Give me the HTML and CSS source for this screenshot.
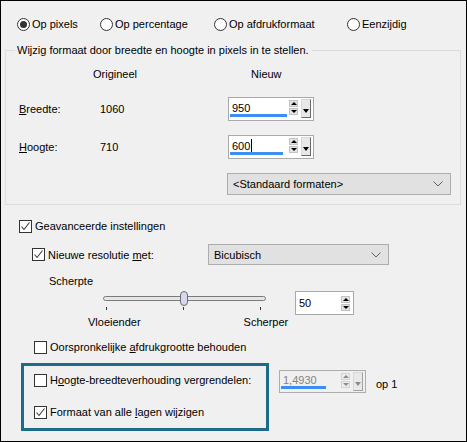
FILE: index.html
```html
<!DOCTYPE html>
<html lang="nl">
<head>
  <link rel="stylesheet" href="styles.css">
</head>
<body>
  <div class="dialog">
    <div class="modes">
      <label class="radio"><span class="circle on"></span>Op pixels</label>
      <label class="radio"><span class="circle"></span>Op percentage</label>
      <label class="radio"><span class="circle"></span>Op afdrukformaat</label>
      <label class="radio"><span class="circle"></span>Eenzijdig</label>
    </div>

    <fieldset class="group">
      <legend>Wijzig formaat door breedte en hoogte in pixels in te stellen.</legend>
      <div class="dim-head">
        <span class="col-orig">Origineel</span>
        <span class="col-new">Nieuw</span>
      </div>
      <div class="dim-row">
        <span class="dim-label"><u>B</u>reedte:</span>
        <span class="dim-value">1060</span>
        <div class="spin">
          <span class="spin-text">950</span>
          <span class="spin-btns"><i class="arr up"></i><i class="arr down"></i></span>
          <span class="spin-drop"><i class="arr down"></i></span>
          <span class="spin-bar" style="width:57px"></span>
        </div>
      </div>
      <div class="dim-row second">
        <span class="dim-label"><u>H</u>oogte:</span>
        <span class="dim-value">710</span>
        <div class="spin">
          <span class="spin-text">600<span class="caret"></span></span>
          <span class="spin-btns"><i class="arr up"></i><i class="arr down"></i></span>
          <span class="spin-drop"><i class="arr down"></i></span>
          <span class="spin-bar" style="width:53px"></span>
        </div>
      </div>
      <div class="select preset">
        <span>&lt;Standaard formaten&gt;</span>
        <svg width="10" height="6" viewBox="0 0 10 6"><polyline points="0.5,0.5 5,5 9.5,0.5" fill="none" stroke="#606060"/></svg>
      </div>
    </fieldset>

    <label class="check row-adv"><span class="box"><svg width="11" height="11" viewBox="0 0 11 11"><polyline points="1.5,5.5 4,8.5 9.5,1.5" fill="none" stroke="#3a3a3a" stroke-width="1.1"/></svg></span><span>Geavanceerde instellingen</span></label>

    <div class="row-res">
      <label class="check"><span class="box"><svg width="11" height="11" viewBox="0 0 11 11"><polyline points="1.5,5.5 4,8.5 9.5,1.5" fill="none" stroke="#3a3a3a" stroke-width="1.1"/></svg></span><span>Nieuwe resolutie <u>m</u>et:</span></label>
      <div class="select method">
        <span>Bicubisch</span>
        <svg width="10" height="6" viewBox="0 0 10 6"><polyline points="0.5,0.5 5,5 9.5,0.5" fill="none" stroke="#606060"/></svg>
      </div>
    </div>

    <div class="sharp-title">Scherpte</div>
    <div class="sharp-row">
      <div class="slider">
        <span class="track"></span>
        <span class="thumb"></span>
        <span class="tick t1"></span>
        <span class="tick t2"></span>
        <span class="tick t3"></span>
      </div>
      <div class="spin small">
        <span class="spin-text">50</span>
        <span class="spin-btns"><i class="arr up"></i><i class="arr down"></i></span>
      </div>
    </div>
    <div class="sharp-labels">
      <span class="lbl-soft">Vloeiender</span>
      <span class="lbl-hard">Scherper</span>
    </div>

    <label class="check row-keep"><span class="box"></span><span>Oorspronkelijke <u>a</u>fdrukgrootte behouden</span></label>

    <div class="lock-row">
      <div class="marked">
        <label class="check"><span class="box"></span><span>H<u>o</u>ogte-breedteverhouding vergrendelen:</span></label>
        <label class="check layers"><span class="box"><svg width="11" height="11" viewBox="0 0 11 11"><polyline points="1.5,5.5 4,8.5 9.5,1.5" fill="none" stroke="#3a3a3a" stroke-width="1.1"/></svg></span><span>Formaat van alle <u>l</u>agen wijzigen</span></label>
      </div>
      <div class="spin disabled">
        <span class="spin-text">1,4930</span>
        <span class="spin-btns"><i class="arr up"></i><i class="arr down"></i></span>
        <span class="spin-drop"><i class="arr down"></i></span>
        <span class="spin-bar" style="width:45px"></span>
      </div>
      <span class="ratio">op 1</span>
    </div>
  </div>
</body>
</html>
```

FILE: styles.css
```css
* {
  box-sizing: border-box;
}

body {
  margin: 0;
  font-family: "Liberation Sans", Arial, sans-serif;
  font-size: 11px;
  color: #000;
}

.dialog {
  width: 467px;
  height: 442px;
  border: 1px solid #000;
  background: #f0f0f0;
  padding-top: 16px;
  line-height: 14px;
}

/* radio row */
.modes {
  display: grid;
  grid-template-columns: 83px 114px 133px auto;
  padding-left: 16px;
  height: 14px;
}

.radio {
  display: flex;
  align-items: center;
  gap: 2px;
  white-space: nowrap;
}

.circle {
  width: 13px;
  height: 13px;
  border: 1px solid #333;
  border-radius: 50%;
  background: #fff;
  display: flex;
  align-items: center;
  justify-content: center;
}

.circle.on::after {
  content: "";
  width: 7px;
  height: 7px;
  border-radius: 50%;
  background: #333;
}

/* group box */
.group {
  margin: 12px 5px 0 4px;
  padding: 0 0 9px 13px;
  border: 1px solid #dcdcdc;
  min-width: 0;
}

.group legend {
  margin-left: -4px;
  padding: 0 3px 0 2px;
  line-height: 14px;
  white-space: nowrap;
}

.dim-head {
  display: flex;
  margin-top: 10px;
  height: 14px;
  padding-left: 74px;
}

.col-orig {
  width: 158px;
}

.dim-row {
  display: flex;
  align-items: center;
  height: 24px;
  margin-top: 16px;
}

.dim-row.second {
  margin-top: 14px;
}

.dim-label {
  width: 81px;
}

.dim-value {
  width: 128px;
}

/* spin box */
.spin {
  position: relative;
  display: flex;
  align-items: center;
  width: 86px;
  height: 24px;
  border: 1px solid #a9a9a9;
  background: #fff;
  padding: 0 2px 0 3px;
}

.spin-text {
  flex: 1;
  padding-bottom: 3px;
}

.caret {
  display: inline-block;
  width: 1px;
  height: 14px;
  margin-left: 1px;
  background: #000;
  vertical-align: -3px;
}

.spin-btns {
  display: flex;
  flex-direction: column;
  gap: 1px;
  margin-top: -3px;
}

.spin-btns .arr {
  width: 9px;
  height: 7px;
  background: #e3e3e3;
  border: 1px solid #c4c4c4;
}

.spin-drop {
  width: 10px;
  height: 19px;
  margin-left: 3px;
  margin-top: -1px;
  background: #e8e8e8;
  border-right: 1px solid #6a6a6a;
  border-bottom: 1px solid #6a6a6a;
  border-top: 1px solid #d8d8d8;
  border-left: 1px solid #d8d8d8;
  display: flex;
  justify-content: center;
  padding-top: 5px;
}

.arr {
  display: flex;
  justify-content: center;
  align-items: center;
}

.arr::after {
  content: "";
  border-left: 3px solid transparent;
  border-right: 3px solid transparent;
}

.arr.up::after {
  border-bottom: 3px solid #000;
}

.arr.down::after {
  border-top: 3px solid #000;
}

.spin-drop .arr::after {
  border-top-width: 4px;
}

.spin-bar {
  position: absolute;
  left: 1px;
  bottom: 3px;
  height: 3px;
  background: #3c8ff0;
}

/* select */
.select {
  display: flex;
  align-items: center;
  justify-content: space-between;
  height: 22px;
  border: 1px solid #adadad;
  background: #e1e1e1;
  padding: 0 7px 0 5px;
}

.select.preset {
  width: 224px;
  margin: 14px 0 0 208px;
}

/* checkboxes */
.check {
  display: flex;
  align-items: center;
  gap: 3px;
  height: 14px;
  white-space: nowrap;
}

.box {
  width: 13px;
  height: 13px;
  border: 1px solid #333;
  background: #fff;
  display: flex;
  align-items: center;
  justify-content: center;
}

.row-adv {
  margin: 14px 0 0 18px;
}

.row-res {
  display: flex;
  align-items: center;
  height: 21px;
  margin: 11px 0 0 31px;
}

.row-res .check {
  width: 176px;
}

.select.method {
  width: 181px;
  height: 21px;
}

.sharp-title {
  margin: 9px 0 0 48px;
}

.sharp-row {
  display: flex;
  margin: 3px 0 0 99px;
  height: 24px;
}

.slider {
  position: relative;
  width: 170px;
  height: 24px;
}

.track {
  position: absolute;
  left: 3px;
  top: 5px;
  width: 163px;
  height: 5px;
  border: 1px solid #7a7a7a;
  border-radius: 3px;
  background: #e6e6e6;
}

.thumb {
  position: absolute;
  left: 80px;
  top: 0;
  width: 8px;
  height: 15px;
  border: 1px solid #6d6d6d;
  border-radius: 4px;
  background: #d6d6ec;
}

.tick {
  position: absolute;
  top: 16px;
  width: 1px;
  height: 3px;
  background: #333;
}

.t1 { left: 6px; }
.t2 { left: 83px; }
.t3 { left: 160px; }

.spin.small {
  width: 59px;
  margin-left: 25px;
}

.spin.small .spin-text {
  padding-bottom: 0;
}

.spin.small .spin-btns {
  margin-top: 0;
  margin-right: 1px;
}

.sharp-labels {
  display: flex;
  height: 14px;
  padding-left: 87px;
}

.lbl-hard {
  margin-left: 103px;
}

.row-keep {
  margin: 11px 0 0 33px;
}

/* highlighted block */
.lock-row {
  display: flex;
  align-items: flex-start;
  margin: 9px 0 0 20px;
}

.marked {
  width: 248px;
  border: 3px solid #1c6b89;
  padding: 7px 0 9px 10px;
}

.marked .layers {
  margin-top: 18px;
}

.spin.disabled {
  width: 87px;
  height: 23px;
  margin: 7px 0 0 10px;
  background: #f0f0f0;
  border-color: #adadad;
  color: #838383;
}

.spin.disabled .arr.up::after {
  border-bottom-color: #8a8a8a;
}

.spin.disabled .arr.down::after {
  border-top-color: #8a8a8a;
}

.spin.disabled .spin-btns .arr {
  background: #ececec;
  border-color: #d4d4d4;
}

.spin.disabled .spin-drop {
  border-right-color: #a0a0a0;
  border-bottom-color: #a0a0a0;
}

.ratio {
  margin: 14px 0 0 10px;
}
```
